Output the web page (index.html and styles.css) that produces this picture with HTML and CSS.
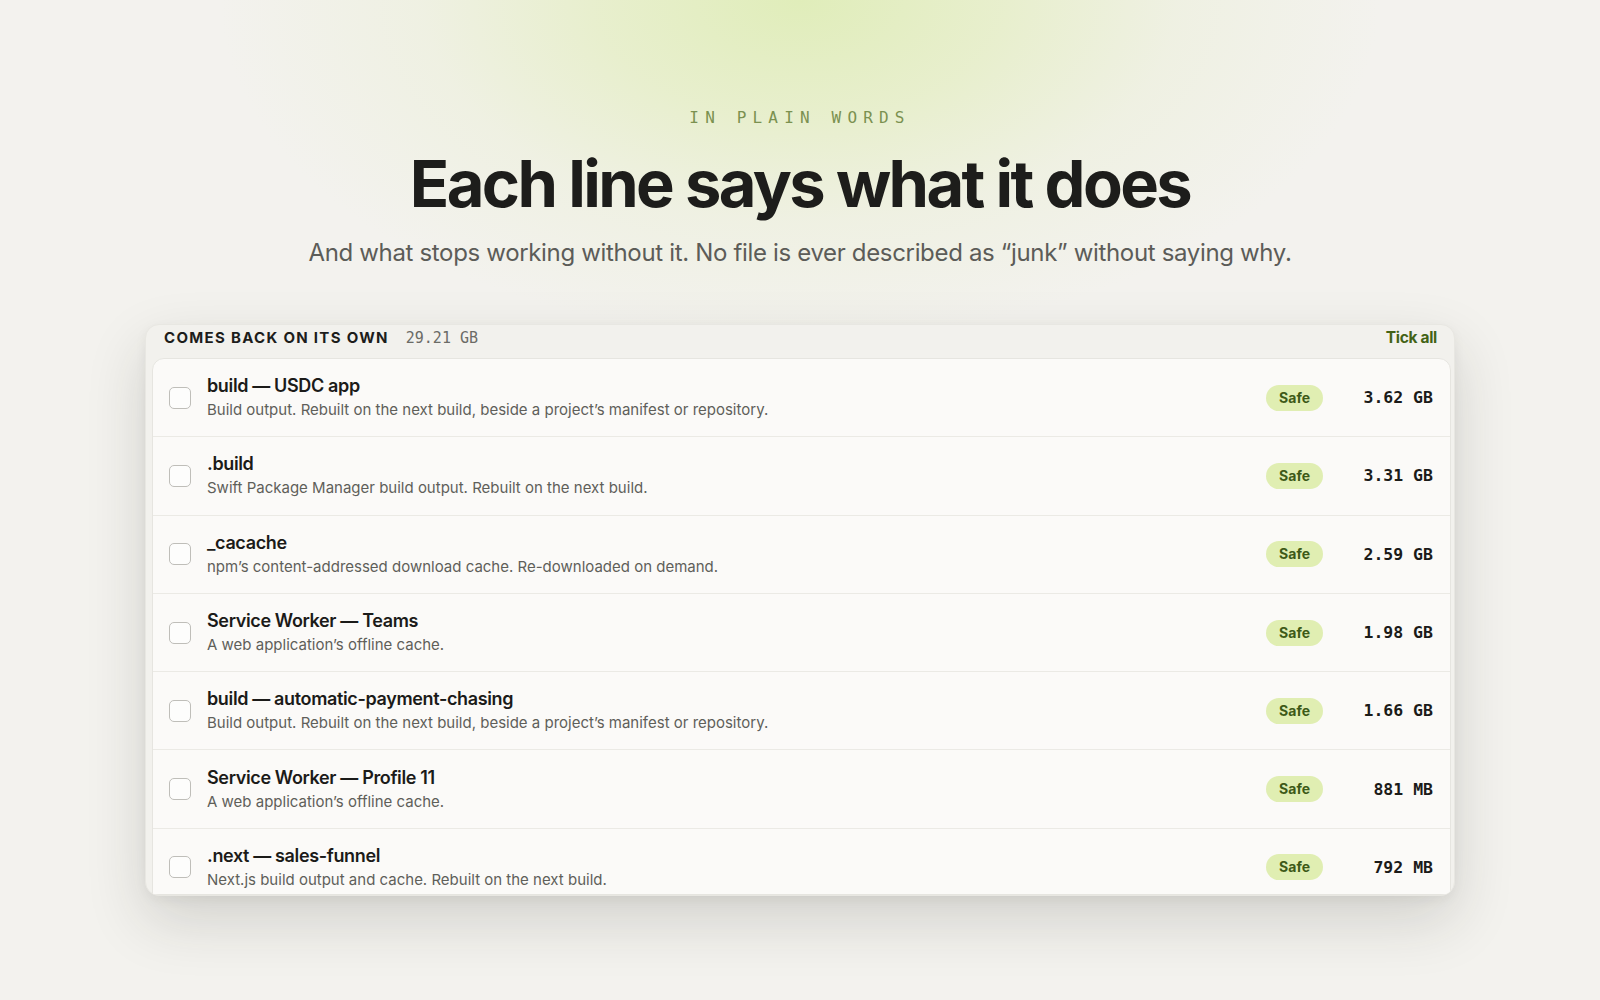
FILE: index.html
```html
<!DOCTYPE html>
<html lang="en">
<head>
<meta charset="utf-8">
<title>Each line says what it does</title>
<link rel="stylesheet" href="styles.css">
</head>
<body>
<div class="glow"></div>
<main class="page">
  <header class="hero">
    <p class="eyebrow">IN PLAIN WORDS</p>
    <h1 class="title">Each line says what it does</h1>
    <p class="subtitle">And what stops working without it. No file is ever described as “junk” without saying why.</p>
  </header>

  <section class="card">
    <div class="card-head">
      <div class="group">
        <span class="group-name">COMES BACK ON ITS OWN</span>
        <span class="group-size">29.21 GB</span>
      </div>
      <span class="tick-all">Tick all</span>
    </div>
    <ul class="list">
      <li class="row">
        <span class="check"></span>
        <div class="info">
          <div class="name">build — USDC app</div>
          <div class="desc">Build output. Rebuilt on the next build, beside a project’s manifest or repository.</div>
        </div>
        <span class="badge">Safe</span>
        <span class="size">3.62 GB</span>
      </li>
      <li class="row">
        <span class="check"></span>
        <div class="info">
          <div class="name">.build</div>
          <div class="desc">Swift Package Manager build output. Rebuilt on the next build.</div>
        </div>
        <span class="badge">Safe</span>
        <span class="size">3.31 GB</span>
      </li>
      <li class="row">
        <span class="check"></span>
        <div class="info">
          <div class="name">_cacache</div>
          <div class="desc">npm’s content-addressed download cache. Re-downloaded on demand.</div>
        </div>
        <span class="badge">Safe</span>
        <span class="size">2.59 GB</span>
      </li>
      <li class="row">
        <span class="check"></span>
        <div class="info">
          <div class="name">Service Worker — Teams</div>
          <div class="desc">A web application’s offline cache.</div>
        </div>
        <span class="badge">Safe</span>
        <span class="size">1.98 GB</span>
      </li>
      <li class="row">
        <span class="check"></span>
        <div class="info">
          <div class="name">build — automatic-payment-chasing</div>
          <div class="desc">Build output. Rebuilt on the next build, beside a project’s manifest or repository.</div>
        </div>
        <span class="badge">Safe</span>
        <span class="size">1.66 GB</span>
      </li>
      <li class="row">
        <span class="check"></span>
        <div class="info">
          <div class="name">Service Worker — Profile 11</div>
          <div class="desc">A web application’s offline cache.</div>
        </div>
        <span class="badge">Safe</span>
        <span class="size">881 MB</span>
      </li>
      <li class="row">
        <span class="check"></span>
        <div class="info">
          <div class="name">.next — sales-funnel</div>
          <div class="desc">Next.js build output and cache. Rebuilt on the next build.</div>
        </div>
        <span class="badge">Safe</span>
        <span class="size">792 MB</span>
      </li>
    </ul>
  </section>
</main>
</body>
</html>
```

FILE: styles.css
```css
* { box-sizing: border-box; }

html, body {
  margin: 0;
  padding: 0;
}

body {
  background: #f3f2ee;
  font-family: Inter, "Noto Sans", "Liberation Sans", sans-serif;
  color: #1c1c1a;
  min-height: 1000px;
  position: relative;
  overflow: hidden;
}

.glow {
  position: absolute;
  left: 0;
  top: 0;
  width: 100%;
  height: 520px;
  background: radial-gradient(ellipse 580px 340px at 800px 0px, rgba(224, 237, 186, 1) 0%, rgba(229, 238, 197, 0.8) 35%, rgba(235, 239, 215, 0.5) 65%, rgba(243, 242, 238, 0) 100%);
  pointer-events: none;
}

.page {
  position: relative;
  padding-top: 108px;
}

.hero {
  text-align: center;
}

.eyebrow {
  margin: 0;
  font-family: "DejaVu Sans Mono", "Liberation Mono", monospace;
  font-size: 16px;
  line-height: 20px;
  letter-spacing: 0.386em;
  color: #7b9150;
}

.title {
  margin: 20px 0 0;
  font-size: 65px;
  line-height: 72px;
  font-weight: 700;
  letter-spacing: -0.04em;
  color: #1d1d1b;
}

.subtitle {
  margin: 17px 0 0;
  font-size: 24px;
  line-height: 32px;
  font-weight: 400;
  color: #5c5c58;
  letter-spacing: -0.014em;
}

.card {
  width: 1310px;
  height: 572px;
  margin: 55px auto 0;
  background: #f2f1ed;
  border: 1px solid #e8e7e2;
  border-radius: 14px;
  overflow: hidden;
  box-shadow: 0 24px 60px rgba(40, 40, 30, 0.16), 0 4px 12px rgba(40, 40, 30, 0.05);
  display: flex;
  flex-direction: column;
}

.card-head {
  height: 33px;
  flex: 0 0 auto;
  display: flex;
  align-items: center;
  justify-content: space-between;
  padding: 0 17px 8px 18px;
}

.group {
  display: flex;
  align-items: baseline;
  gap: 17px;
}

.group-name {
  font-size: 15px;
  font-weight: 700;
  letter-spacing: 0.087em;
  color: #1d1d1b;
}

.group-size {
  font-family: "DejaVu Sans Mono", "Liberation Mono", monospace;
  font-size: 15px;
  color: #6b6b66;
}

.tick-all {
  font-size: 15.5px;
  font-weight: 700;
  color: #436316;
  letter-spacing: -0.02em;
}

.list {
  list-style: none;
  margin: 0 3px 0 6px;
  padding: 0;
  background: #fbfaf8;
  border: 1px solid #e6e5e0;
  border-radius: 12px 12px 0 0;
  flex: 1 1 auto;
  overflow: hidden;
}

.row {
  display: flex;
  align-items: center;
  min-height: 78.3px;
  padding: 0 17px 0 16px;
  border-bottom: 1px solid #ebeae5;
}

.check {
  flex: 0 0 auto;
  width: 22px;
  height: 22px;
  border: 1.5px solid #bfbeb9;
  border-radius: 5px;
  background: #fdfdfc;
}

.info {
  flex: 1 1 auto;
  margin-left: 16px;
  display: flex;
  flex-direction: column;
  gap: 1px;
}

.name {
  font-size: 18px;
  line-height: 24px;
  font-weight: 600;
  color: #1b1b19;
  letter-spacing: -0.02em;
}

.desc {
  font-size: 15px;
  line-height: 22px;
  color: #5f5f5a;
}

.badge {
  flex: 0 0 auto;
  height: 26px;
  line-height: 26px;
  padding: 0 13px;
  border-radius: 13px;
  background: #e0eeb2;
  color: #3d5a18;
  font-size: 14px;
  font-weight: 700;
}

.size {
  flex: 0 0 auto;
  width: 110px;
  text-align: right;
  font-family: "DejaVu Sans Mono", "Liberation Mono", monospace;
  font-size: 16.5px;
  font-weight: 700;
  color: #1b1b19;
}
```
